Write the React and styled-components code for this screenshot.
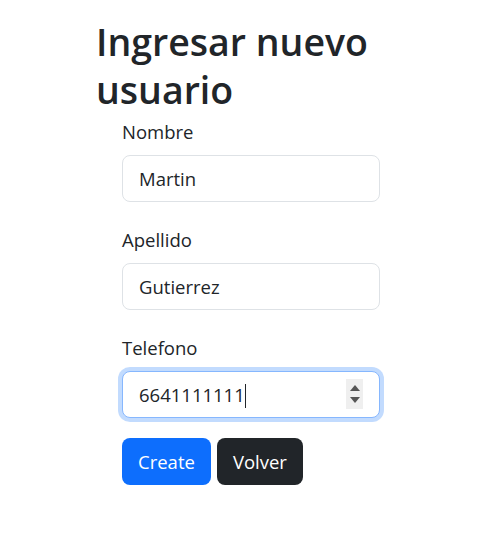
import React from 'react'
import styled, { createGlobalStyle } from 'styled-components'

const GlobalStyle = createGlobalStyle`
  body {
    margin: 0;
    background: #fff;
    color: #212529;
    font-family: "Open Sans", "Noto Sans", sans-serif;
  }
`

const Page = styled.div`
  padding: 18px 0 0 96px;
`

const Title = styled.h1`
  margin: 0 0 4px 0;
  width: 300px;
  font-size: 37.5px;
  font-weight: 600;
  line-height: 47.5px;
  letter-spacing: 0;
`

const Form = styled.form`
  margin-left: 26px;
  width: 258px;
`

const Group = styled.div`
  margin-bottom: ${p => (p.last ? '20px' : '23px')};
`

const Label = styled.label`
  display: block;
  font-size: 18.5px;
  line-height: 30px;
  margin-bottom: 8px;
`

const Field = styled.div`
  position: relative;
`

const Input = styled.input`
  box-sizing: border-box;
  width: 100%;
  height: 47px;
  padding: 0 16px;
  font-family: inherit;
  font-size: 18.5px;
  color: #212529;
  border: 1px solid ${p => (p.focused ? '#86b7fe' : '#dee2e6')};
  border-radius: 8px;
  outline: none;
  box-shadow: ${p => (p.focused ? '0 0 0 4px rgba(13, 110, 253, 0.25)' : 'none')};
  caret-color: #212529;
`

const Caret = styled.span`
  position: absolute;
  top: 13px;
  left: ${p => p.x}px;
  width: 1px;
  height: 24px;
  background: #212529;
`

const Spinner = styled.div`
  position: absolute;
  right: 17px;
  top: 8px;
  width: 17px;
  height: 30px;
  background: #efefef;
  display: flex;
  flex-direction: column;
  align-items: center;
  justify-content: center;
  gap: 6px;
`

const Arrow = styled.span`
  width: 0;
  height: 0;
  border-left: 5px solid transparent;
  border-right: 5px solid transparent;
  ${p => (p.down ? 'border-top: 6px solid #555;' : 'border-bottom: 6px solid #555;')}
`

const Buttons = styled.div`
  display: flex;
  gap: 6px;
`

const Button = styled.button`
  height: 47px;
  padding: 0 16px;
  font-family: inherit;
  font-size: 18.5px;
  color: #fff;
  border: none;
  border-radius: 8px;
  background: ${p => (p.variant === 'dark' ? '#212529' : '#0d6efd')};
  cursor: pointer;
`

export default function App() {
  return (
    <>
      <GlobalStyle />
      <Page>
        <Title>Ingresar nuevo usuario</Title>
        <Form onSubmit={e => e.preventDefault()}>
          <Group>
            <Label htmlFor="nombre">Nombre</Label>
            <Input id="nombre" defaultValue="Martin" />
          </Group>
          <Group>
            <Label htmlFor="apellido">Apellido</Label>
            <Input id="apellido" defaultValue="Gutierrez" />
          </Group>
          <Group last>
            <Label htmlFor="telefono">Telefono</Label>
            <Field>
              <Input id="telefono" focused defaultValue="6641111111" />
              <Caret x={123} />
              <Spinner>
                <Arrow />
                <Arrow down />
              </Spinner>
            </Field>
          </Group>
          <Buttons>
            <Button type="submit">Create</Button>
            <Button type="button" variant="dark">Volver</Button>
          </Buttons>
        </Form>
      </Page>
    </>
  )
}
